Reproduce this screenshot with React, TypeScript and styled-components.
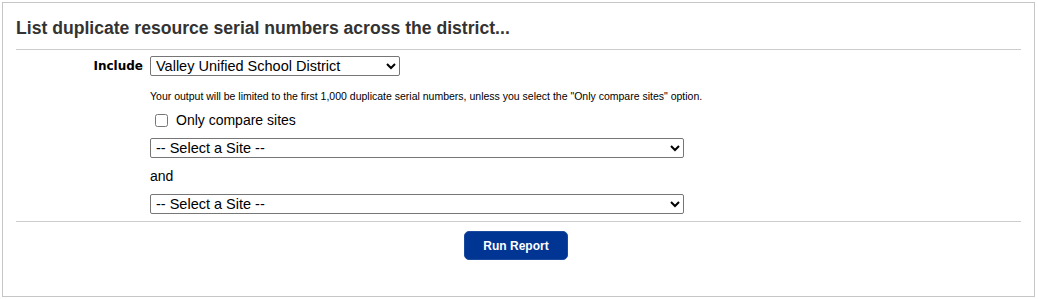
import React from 'react'
import styled, { createGlobalStyle } from 'styled-components'

const GlobalStyle = createGlobalStyle`
  html, body {
    margin: 0;
    padding: 0;
    background: #fff;
    font-family: "Liberation Sans", Arial, sans-serif;
    color: #000;
  }
`

const Panel = styled.div`
  border: 1px solid #c6c6c6;
  box-sizing: border-box;
  height: 295px;
  margin: 2px 3px 2px 2px;
  padding: 0 13px;
`

const Header = styled.div`
  border-bottom: 1px solid #cccccc;
  padding: 15px 0 11px;
`

const Title = styled.h2`
  color: #333;
  font-size: 17.6px;
  font-weight: bold;
  line-height: 20px;
  margin: 0;
`

const Form = styled.div`
  border-bottom: 1px solid #cccccc;
  column-gap: 7px;
  display: grid;
  grid-template-columns: 127px 1fr;
  padding: 6px 0 7px;
`

const Label = styled.label`
  align-self: start;
  font-family: "DejaVu Sans", Verdana, sans-serif;
  font-size: 12px;
  font-weight: bold;
  line-height: 20px;
  text-align: right;
`

const Fields = styled.div`
  display: flex;
  flex-direction: column;
  align-items: flex-start;
`

const Select = styled.select<{ $width: number }>`
  border: 1px solid #767676;
  border-radius: 2px;
  box-sizing: border-box;
  color: #000;
  font-family: "Liberation Sans", Arial, sans-serif;
  font-size: 14.5px;
  height: 20px;
  padding: 0 1px;
  width: ${p => p.$width}px;
  background: #fff;
`

const Note = styled.p`
  font-size: 10.5px;
  line-height: 14px;
  margin: 13px 0 0;
`

const CheckRow = styled.div`
  align-items: center;
  display: flex;
  height: 20px;
  margin: 7px 0 8px;
`

const Check = styled.input`
  height: 13px;
  margin: 0 0 0 5px;
  width: 13px;
`

const CheckText = styled.span`
  font-size: 14px;
  margin-left: 8px;
`

const Conj = styled.div`
  font-size: 14px;
  line-height: 16px;
  margin: 10px 0;
`

const Footer = styled.div`
  display: flex;
  justify-content: center;
  padding: 9px 5px 0 0;
`

const RunButton = styled.button`
  background-color: #003594;
  border: 1px solid #1a4a9e;
  border-radius: 5px;
  color: #fff;
  cursor: pointer;
  font-family: "Liberation Sans", Arial, sans-serif;
  font-size: 12px;
  font-weight: bold;
  height: 29px;
  width: 104px;
`

const App = () => {
  return (
    <>
      <GlobalStyle />
      <Panel>
        <Header>
          <Title>List duplicate resource serial numbers across the district...</Title>
        </Header>
        <Form>
          <Label htmlFor='include'>Include</Label>
          <Fields>
            <Select id='include' $width={250} defaultValue='district'>
              <option value='district'>Valley Unified School District</option>
            </Select>
            <Note>
              Your output will be limited to the first 1,000 duplicate serial numbers, unless you select the "Only compare sites" option.
            </Note>
            <CheckRow>
              <Check type='checkbox' id='onlySites' />
              <CheckText>Only compare sites</CheckText>
            </CheckRow>
            <Select $width={534} defaultValue=''>
              <option value=''>-- Select a Site --</option>
            </Select>
            <Conj>and</Conj>
            <Select $width={534} defaultValue=''>
              <option value=''>-- Select a Site --</option>
            </Select>
          </Fields>
        </Form>
        <Footer>
          <RunButton type='button'>Run Report</RunButton>
        </Footer>
      </Panel>
    </>
  )
}

export default App
